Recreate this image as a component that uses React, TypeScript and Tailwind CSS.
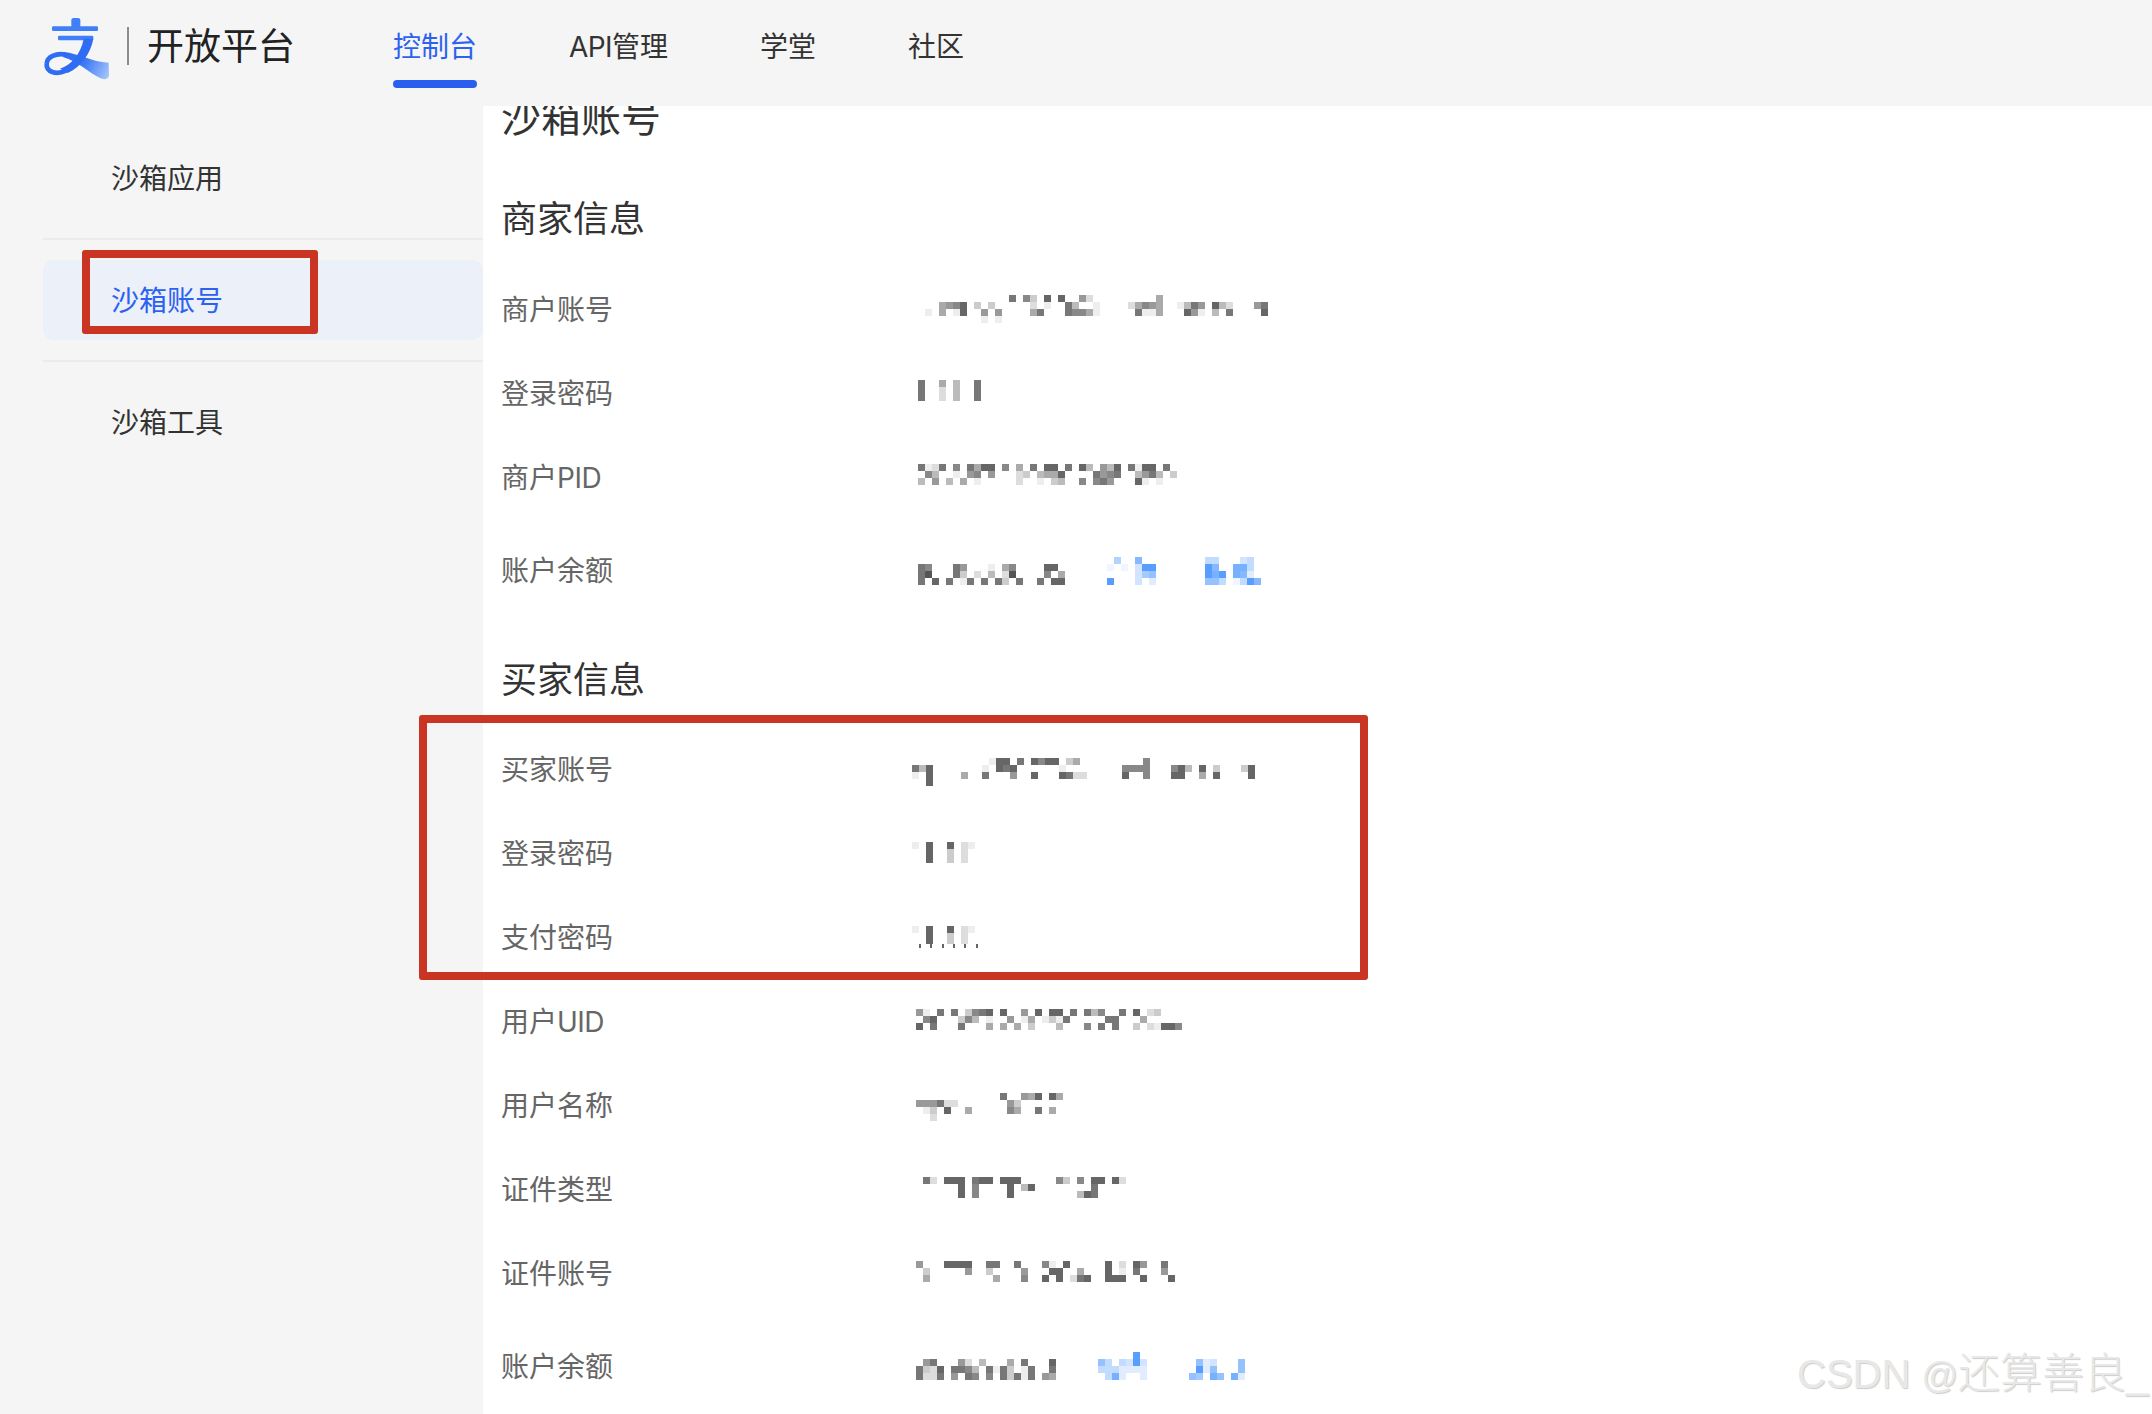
import React from "react";

const FONT = "font-['Inter','Noto_Sans_CJK_SC',sans-serif]";
const d = (n: number) => ".".repeat(n);

type Mos = { x: number; y: number; grey: string[]; blue?: string[]; h: number; ticks?: boolean };

function greyHex(c: string) {
  return "#" + c + c + c;
}
function blueHex(c: string) {
  const v = parseInt(c, 16);
  const r = Math.round(88 + (v - 5) * 15.2);
  const g = Math.round(158 + (v - 5) * 8.8);
  return `rgb(${r},${g},255)`;
}

function Mosaic({ m }: { m: Mos }) {
  const cell = (rows: string[], colour: (c: string) => string) =>
    rows.flatMap((row, ry) =>
      row.split("").map((c, cx) =>
        c === "." ? null : (
          <rect key={`${colour === greyHex ? "g" : "b"}${ry}-${cx}`} x={m.x + cx * 7} y={m.y + ry * 7} width={7} height={7} fill={colour(c)} />
        )
      )
    );
  return (
    <svg width={370} height={m.h} className="block shrink-0" shapeRendering="crispEdges">
      {cell(m.grey, greyHex)}
      {m.blue ? cell(m.blue, blueHex) : null}
      {m.ticks ? (
        <>
          <rect x={0} y={m.y + 18} width={80} height={4} fill="#fff" />
          {[8, 19, 31, 42, 53, 65].map((tx) => (
            <rect key={tx} x={tx} y={m.y + 18} width={2} height={4} fill="#666" />
          ))}
        </>
      ) : null}
    </svg>
  );
}

const Latin = ({ t }: { t: string }) => <span className="tracking-[-0.5px]">{t}</span>;

const merchant: { label: React.ReactNode; m: Mos }[] = [
  {
    label: "商户账号",
    m: {
      x: 7,
      y: 27,
      h: 84,
      grey: [
        d(13) + "7.8c.6.6f.9d" + d(8) + "fa",
        "f..a986.c.c...f.d.e..7bf.ef.f.da89af.eb79.6bdf.f97",
        ".e.afe6..9.9.f.fa7...788ae.f.f.7eea...69e.b.7..f.6",
        ".........e.e",
      ],
    },
  },
  { label: "登录密码", m: { x: 7, y: 28, h: 84, grey: ["7..a.bf.7", "7..d.b..7", "7..d.b..7"] } },
  {
    label: (
      <>
        商户
        <Latin t="PID" />
      </>
    ),
    m: {
      x: 7,
      y: 28,
      h: 84,
      grey: [
        "7ed7.8.7a66.8.a.7.66f7.6b.9b6.7e66.7",
        ".8b..e.98.9..fdc.baa6....7987.fb97b.c",
        "b.9.b.a.e.f.f.df.e.cb..8.879...6e.e.f",
      ],
    },
  },
  {
    label: "账户余额",
    m: {
      x: 7,
      y: 37,
      h: 102,
      grey: ["", "78...79.f.efa8....66", "75...7c.d.b.d5....8.a", "7.6.7.e7.7.7c.7..7.66"],
      blue: [
        d(28) + "b..8" + d(9) + "cc...dc",
        d(27) + "f.f.d55" + d(7) + "58..77c",
        d(31) + "da9" + d(7) + "575.78e",
        d(27) + "5...d.e" + d(7) + "99c.fc58",
      ],
    },
  },
];

const pwBuyer = ["e.6..6.de", "..6..c.d.", "..6..c.d."];

const buyer: { label: React.ReactNode; m: Mos }[] = [
  {
    label: "买家账号",
    m: {
      x: 1,
      y: 30,
      h: 84,
      grey: [
        d(11) + "e66.7.6866.ca" + d(9) + "8",
        "7b6....f..e.676......e.ff.....8888...86b.6fc...c6",
        "e.6...fa..7...9..6...67dd.....6ff8...66f.a.6....6",
        "..6",
      ],
    },
  },
  { label: "登录密码", m: { x: 1, y: 30, h: 84, grey: pwBuyer } },
  { label: "支付密码", m: { x: 1, y: 30, h: 84, grey: pwBuyer, ticks: true } },
  {
    label: (
      <>
        用户
        <Latin t="UID" />
      </>
    ),
    m: {
      x: 5,
      y: 29,
      h: 84,
      grey: [
        "9e.7.7.c876.6.f9.6.66.7f7b8f.7.6.dc",
        ".86...c8b.e..9.ea.ece7.....77...af",
        "6.7.f.7f..a.a.a.c.f.b...8.7.7..c.de668",
      ],
    },
  },
  {
    label: "用户名称",
    m: {
      x: 5,
      y: 29,
      h: 84,
      grey: ["............7.f9a6.6a", "9997dd...f...9c", ".ec.6..a.....8a..7.a", "..d"],
    },
  },
  {
    label: "证件类型",
    m: {
      x: 5,
      y: 29,
      h: 84,
      grey: [".7d.666.766.666.....8c.8.66.6d", "......6f8....6.b6..f.....7", "......6.8....6........fb67"],
    },
  },
  {
    label: "证件账号",
    m: {
      x: 5,
      y: 29,
      h: 84,
      grey: [
        "9f..6666..77..7...8e.6.....6.d.69..7",
        ".c.....9..cf...9...66..a...6.e.7...9",
        ".a..f......a...8..6.6.d76..666f.6...6",
      ],
    },
  },
  {
    label: "账户余额",
    m: {
      x: 5,
      y: 36,
      h: 102,
      grey: ["", ".97...9dfb...a.7...6", "7cd6.778b.7e7c.e7..7", "7dd7.9.78.8.7c7e7.9a"],
      blue: [
        d(31) + "5",
        d(26) + "9c.cd5d" + d(7) + "9ed...9",
        d(26) + "ccceeee" + d(7) + "5e9...9",
        d(27) + "c7e..e" + d(6) + "9a.79.7e",
      ],
    },
  },
];

function Logo() {
  return (
    <svg width={80} height={68} viewBox="0 0 240 204" className="shrink-0">
      <defs>
        <linearGradient id="sweep" x1="90" y1="120" x2="222" y2="190" gradientUnits="userSpaceOnUse">
          <stop offset="0" stopColor="#2f69f1" />
          <stop offset="0.45" stopColor="#3f7bf5" />
          <stop offset="1" stopColor="#a9c8fb" />
        </linearGradient>
      </defs>
      <rect x="106" y="18" width="27" height="34" rx="7" fill="#3f7ff7" />
      <rect x="48" y="43" width="138" height="14" rx="4" fill="#3f7ff7" />
      <rect x="66" y="71" width="106" height="14" rx="4" fill="#3f7ff7" />
      <path d="M90 176 C60 190 30 180 32 155 C33 135 60 122 90 128" fill="none" stroke="#2f6bf3" strokeWidth="14" />
      <path d="M82 120 C130 124 165 150 218 152 L219 190 C218 203 205 204 192 198 C155 180 125 148 82 136 Z" fill="url(#sweep)" />
      <path d="M143 80 L172 80 C164 125 135 165 95 183 L72 170 C105 160 135 125 143 80 Z" fill="#2f6bf3" />
    </svg>
  );
}

function Row({ label, m }: { label: React.ReactNode; m: Mos }) {
  return (
    <div className="flex items-center">
      <div className="w-[410px] shrink-0 text-[28px] leading-[40px] text-[#666]">{label}</div>
      <Mosaic m={m} />
    </div>
  );
}

const Side = ({ t, active, className }: { t: string; active?: boolean; className?: string }) => (
  <div
    className={`h-[80px] flex items-center pl-[68px] text-[28px] rounded-[10px] ${
      active ? "bg-[#ecf0f8] text-[#2d62f0]" : "text-[#333]"
    } ${className ?? ""}`}
  >
    {t}
  </div>
);

export default function App() {
  return (
    <div className={`relative flex h-[1414px] w-[2152px] flex-col overflow-hidden bg-white ${FONT}`}>
      <header className="relative z-10 flex h-[106px] shrink-0 items-start bg-[#f5f5f5]">
        <div className="ml-[36px] mt-[12px]">
          <Logo />
        </div>
        <div className="ml-[11px] mt-[27px] h-[38px] w-[2px] bg-[#8c8c8c]" />
        <div className="ml-[18px] mt-[24px] text-[37px] leading-[46px] text-[#222]">开放平台</div>
        <nav className="ml-[98px] flex gap-[92px] text-[28px] leading-[46px] text-[#333]">
          <div className="relative h-[88px] pt-[24px] text-[#2d62f0]">
            控制台
            <div className="absolute bottom-0 left-0 right-0 h-[8px] rounded-full bg-[#2a5eee]" />
          </div>
          <div className="pt-[24px]">
            <span className="tracking-[-0.6px]">API</span>管理
          </div>
          <div className="pt-[24px]">学堂</div>
          <div className="pt-[24px]">社区</div>
        </nav>
      </header>
      <div className="flex flex-1 overflow-hidden">
        <aside className="w-[483px] shrink-0 bg-[#f5f5f5] pl-[43px] pt-[33px]">
          <Side t="沙箱应用" />
          <div className="mb-[20px] mt-[19px] h-[2px] bg-[#ececec]" />
          <Side t="沙箱账号" active className="pt-[2px]" />
          <div className="mb-[21px] mt-[20px] h-[2px] bg-[#ececec]" />
          <Side t="沙箱工具" />
        </aside>
        <main className="flex-1 overflow-hidden pl-[18px]">
          <h1 className="-mt-[16px] text-[40px] font-normal leading-[56px] text-[#333]">沙箱账号</h1>
          <h2 className="mt-[24px] text-[36px] font-normal leading-[98px] text-[#333]">商家信息</h2>
          {merchant.map((r, i) => (
            <Row key={i} {...r} />
          ))}
          <h2 className="mt-[10px] text-[36px] font-normal leading-[96px] text-[#333]">买家信息</h2>
          {buyer.map((r, i) => (
            <Row key={i} {...r} />
          ))}
        </main>
      </div>
      <div className="absolute left-[82px] top-[250px] h-[84px] w-[236px] rounded-[3px] border-[8px] border-[#c93522]" />
      <div className="absolute left-[419px] top-[715px] h-[265px] w-[949px] rounded-[3px] border-[8px] border-[#c93522]" />
      <div className="absolute left-[1797px] top-[1351px] font-['Liberation_Sans','Noto_Sans_CJK_SC',sans-serif] text-[40px] font-light leading-[46px] text-[#e8e8e8] [text-shadow:1px_1px_1px_#cccccc] whitespace-nowrap">
        CSDN <span className="text-[36px]">@</span>
        <span className="text-[42px]">还算善良</span>_
      </div>
    </div>
  );
}
